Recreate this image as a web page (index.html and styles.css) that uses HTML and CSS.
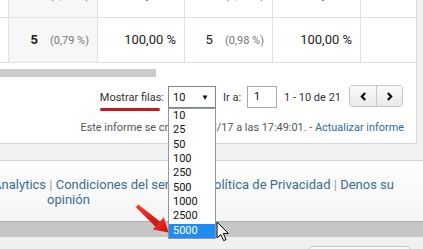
FILE: index.html
```html
<!DOCTYPE html>
<html lang="es">
<head>
<meta charset="utf-8">
<title>Informe</title>
<link rel="stylesheet" href="styles.css">
</head>
<body>
<div class="page">
  <section class="card">
    <table class="data">
      <tr>
        <td class="c-edge"></td>
        <td class="c-sorted"><b>6</b><span class="pct">(0,95 %)</span></td>
        <td>100,00 %</td>
        <td><span>6</span><span class="pct">(1,18 %)</span></td>
        <td>100,00 %</td>
        <td class="c-last"></td>
      </tr>
      <tr>
        <td class="c-edge"></td>
        <td class="c-sorted"><b>5</b><span class="pct">(0,79 %)</span></td>
        <td>100,00 %</td>
        <td><span>5</span><span class="pct">(0,98 %)</span></td>
        <td>100,00 %</td>
        <td class="c-last"></td>
      </tr>
    </table>
    <div class="hscroll"><div class="thumb"></div></div>
    <div class="pager">
      <span class="rows-label">Mostrar filas:</span>
      <div class="select">
        <span>10</span><span class="caret">▼</span>
        <ul class="dropdown">
          <li>10</li>
          <li>25</li>
          <li>50</li>
          <li>100</li>
          <li>250</li>
          <li>500</li>
          <li>1000</li>
          <li>2500</li>
          <li class="active">5000</li>
        </ul>
      </div>
      <span class="goto">Ir a:</span>
      <span class="page-input">1</span>
      <span class="range">1 - 10 de 21</span>
      <div class="nav">
        <span class="nav-btn"><svg width="7" height="9" viewBox="0 0 7 9"><path d="M5.2 1 L1.8 4.5 L5.2 8" fill="none" stroke="#111" stroke-width="2.2"/></svg></span>
        <span class="nav-btn"><svg width="7" height="9" viewBox="0 0 7 9"><path d="M1.8 1 L5.2 4.5 L1.8 8" fill="none" stroke="#111" stroke-width="2.2"/></svg></span>
      </div>
    </div>
    <p class="info">Este informe se creó el 21/3/17 a las 17:49:01. - <a class="link">Actualizar informe</a></p>
  </section>
  <footer class="footer">
    <div class="foot-line1"><span>© 2017 Google | <a>Página principal de Analytics</a> <i>|</i> <a>Condiciones del servicio</a> <i>|</i> <a>Política de Privacidad</a> <i>|</i> <a>Denos su</a></span></div>
    <div class="foot-line2"><a>opinión</a></div>
  </footer>
  <div class="bottom-bar"></div>
  <div class="bottom-area"><div class="bottom-box"></div></div>

  <svg class="arrow" width="423" height="249" viewBox="0 0 423 249">
    <defs>
      <linearGradient id="rg" x1="0" y1="0" x2="1" y2="1">
        <stop offset="0" stop-color="#ff3b30"/>
        <stop offset="1" stop-color="#c40d0d"/>
      </linearGradient>
    </defs>
    <polygon points="135.8,207.3 138.2,204.6 160.9,222.2 156.3,227.4" fill="url(#rg)"/>
    <polygon points="168.5,232.5 152.8,229.6 163.8,217.2" fill="url(#rg)"/>
  </svg>
  <svg class="cursor" width="14" height="22" viewBox="0 0 14 22">
    <path d="M1 1 V17 L4.8 13.4 L7.6 19.6 L10 18.6 L7.3 12.4 H12.4 Z" fill="#fff" stroke="#000" stroke-width="1" stroke-linejoin="round"/>
  </svg>
</div>
</body>
</html>
```

FILE: styles.css
```css
* { box-sizing: border-box; }
html, body { margin: 0; padding: 0; }
body {
  background: #f1f1f1;
  font-family: Roboto, "Liberation Sans", Arial, sans-serif;
  color: #333;
  width: 423px;
  height: 249px;
  overflow: hidden;
}
.page {
  position: relative;
  width: 423px;
  height: 249px;
  overflow: hidden;
}

/* card */
.card {
  width: 417px;
  height: 144px;
  background: #fff;
  border-right: 1px solid #dadada;
  border-bottom: 1px solid #d6d6d6;
  display: flex;
  flex-direction: column;
}
.data {
  border-collapse: collapse;
  table-layout: fixed;
  width: 416px;
  margin-top: -28px;
  font-size: 13px;
  color: #222;
}
.data td {
  height: 45px;
  border: 1px solid #e2e2e2;
  border-top: none;
  padding: 0 8px 0 0;
  text-align: right;
  white-space: nowrap;
  vertical-align: middle;
}
.data td:nth-child(1) { width: 7px; border-left: none; }
.data td:nth-child(2) { width: 89px; }
.data td:nth-child(3) { width: 87px; }
.data td:nth-child(4) { width: 88px; }
.data td:nth-child(5) { width: 88px; }
.data td:nth-child(6) { border-right: none; }
.data .c-sorted { background: #f7f7f7; }
.data b { font-weight: 700; }
.pct {
  font-size: 11px;
  color: #777;
  margin-left: 12px;
}

.hscroll { margin-top: 6px; height: 8px; }
.thumb { width: 156px; height: 8px; background: #cbcbcb; }

/* pager */
.pager {
  margin-top: 9px;
  height: 23px;
  display: flex;
  justify-content: flex-end;
  align-items: center;
  padding-right: 13px;
  font-size: 11px;
  color: #333;
}
.rows-label {
  position: relative;
  line-height: 13px;
  margin-right: 4px;
}
.rows-label::after {
  content: "";
  position: absolute;
  left: 0;
  top: 17px;
  width: 60px;
  height: 3px;
  border-radius: 2px;
  background: #c8161d;
}
.select {
  position: relative;
  width: 48px;
  height: 22px;
  border: 1px solid #858585;
  background: #fff;
  display: flex;
  align-items: center;
  justify-content: space-between;
  padding: 0 6px 0 4px;
  margin-right: 7px;
  color: #111;
}
.caret { font-size: 8px; color: #111; }
.dropdown {
  position: absolute;
  left: -1px;
  top: 21px;
  width: 48px;
  margin: 0;
  padding: 0;
  list-style: none;
  background: #fff;
  border: 1px solid #8b98a8;
  font-size: 11px;
  color: #111;
}
.dropdown li {
  height: 14.33px;
  line-height: 14.33px;
  padding-left: 4px;
}
.dropdown li.active { background: #1e8cf0; color: #fff; }
.goto { margin-right: 6px; }
.page-input {
  width: 30px;
  height: 22px;
  border: 1px solid #a9a9a9;
  padding-left: 6px;
  line-height: 20px;
  margin-right: 7px;
  color: #111;
}
.range { margin-right: 8px; }
.nav {
  display: flex;
  height: 22px;
  margin-top: -2px;
  border: 1px solid #c4c4c4;
  border-radius: 3px;
  overflow: hidden;
}
.nav-btn {
  width: 26px;
  display: flex;
  align-items: center;
  justify-content: center;
  background: linear-gradient(#fbfbfb, #e9e9e9);
}
.nav-btn + .nav-btn { border-left: 1px solid #c8c8c8; }

.info {
  margin: 12px 0 0;
  padding-right: 12px;
  text-align: right;
  font-size: 10.9px;
  line-height: 14px;
  color: #555;
}
.link { color: #2d6a9a; }

/* footer */
.footer {
  margin-top: 16px;
  height: 61px;
  border-top: 1px solid #d4d4d4;
  background: linear-gradient(#fdfdfd, #f5f5f5);
  padding-top: 16px;
  font-size: 13px;
  line-height: 15px;
  color: #3a6d90;
}
.footer a { color: #3a6d90; }
.footer i { font-style: normal; color: #9a9a9a; }
.foot-line1 {
  width: 394px;
  display: flex;
  justify-content: flex-end;
  white-space: nowrap;
}
.foot-line2 { padding-left: 47px; }

.bottom-bar {
  height: 16px;
  background: #c6c6c6;
  border-top: 1px solid #adadad;
}
.bottom-area { height: 12px; background: #f0f0f0; padding-top: 9px; }
.bottom-box {
  margin-left: 308px;
  width: 103px;
  height: 10px;
  border: 1px solid #c2c2c2;
  border-radius: 5px;
  background: #fafafa;
}

/* annotations */
.arrow {
  position: absolute;
  left: 0;
  top: 0;
  pointer-events: none;
}
.cursor {
  position: absolute;
  left: 216px;
  top: 221px;
  pointer-events: none;
}
```
